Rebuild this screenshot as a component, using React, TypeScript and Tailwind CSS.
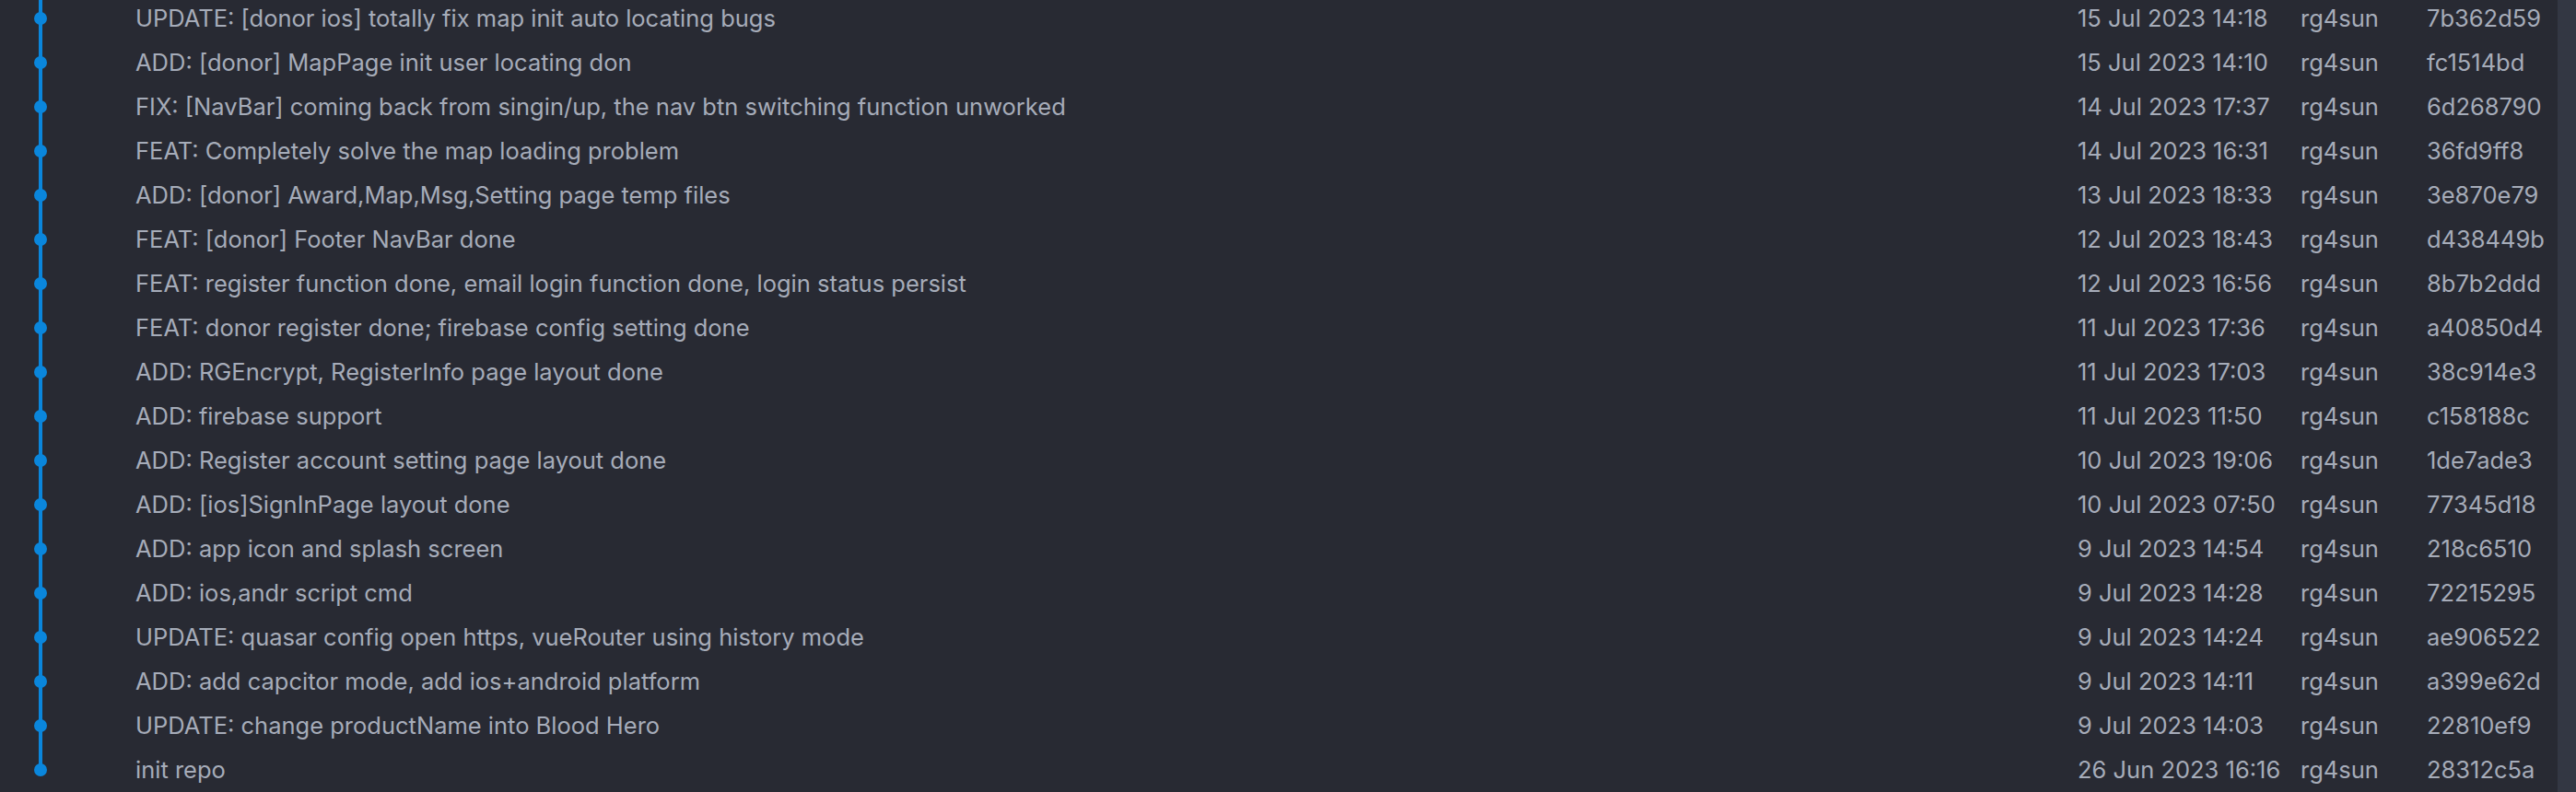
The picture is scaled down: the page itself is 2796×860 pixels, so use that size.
import * as React from "react"

const commits = [
  { msg: "UPDATE: [donor ios] totally fix map init auto locating bugs", date: "15 Jul 2023 14:18", hash: "7b362d59" },
  { msg: "ADD: [donor] MapPage init user locating don", date: "15 Jul 2023 14:10", hash: "fc1514bd" },
  { msg: "FIX: [NavBar] coming back from singin/up, the nav btn switching function unworked", date: "14 Jul 2023 17:37", hash: "6d268790" },
  { msg: "FEAT: Completely solve the map loading problem", date: "14 Jul 2023 16:31", hash: "36fd9ff8" },
  { msg: "ADD: [donor] Award,Map,Msg,Setting page temp files", date: "13 Jul 2023 18:33", hash: "3e870e79" },
  { msg: "FEAT: [donor] Footer NavBar done", date: "12 Jul 2023 18:43", hash: "d438449b" },
  { msg: "FEAT: register function done, email login function done, login status persist", date: "12 Jul 2023 16:56", hash: "8b7b2ddd" },
  { msg: "FEAT: donor register done; firebase config setting done", date: "11 Jul 2023 17:36", hash: "a40850d4" },
  { msg: "ADD: RGEncrypt, RegisterInfo page layout done", date: "11 Jul 2023 17:03", hash: "38c914e3" },
  { msg: "ADD: firebase support", date: "11 Jul 2023 11:50", hash: "c158188c" },
  { msg: "ADD: Register account setting page layout done", date: "10 Jul 2023 19:06", hash: "1de7ade3" },
  { msg: "ADD: [ios]SignInPage layout done", date: "10 Jul 2023 07:50", hash: "77345d18" },
  { msg: "ADD: app icon and splash screen", date: "9 Jul 2023 14:54", hash: "218c6510" },
  { msg: "ADD: ios,andr script cmd", date: "9 Jul 2023 14:28", hash: "72215295" },
  { msg: "UPDATE: quasar config open https, vueRouter using history mode", date: "9 Jul 2023 14:24", hash: "ae906522" },
  { msg: "ADD: add capcitor mode, add ios+android platform", date: "9 Jul 2023 14:11", hash: "a399e62d" },
  { msg: "UPDATE: change productName into Blood Hero", date: "9 Jul 2023 14:03", hash: "22810ef9" },
  { msg: "init repo", date: "26 Jun 2023 16:16", hash: "28312c5a" },
]

function Graph({ last }: { last: boolean }) {
  return (
    <div className="relative h-full w-[147px] shrink-0">
      <div className={last ? "absolute left-[42px] top-0 h-1/2 w-[4px] bg-[#0a86dc]" : "absolute left-[42px] top-0 h-full w-[4px] bg-[#0a86dc]"} />
      <div className="absolute left-[37px] top-[17px] h-[14px] w-[14px] rounded-full bg-[#0a86dc]" />
    </div>
  )
}

export default function App() {
  return (
    <div className="flex h-[860px] w-full overflow-hidden bg-[#282a33] font-['Inter',sans-serif] text-[25.5px] text-[#a6acb9]">
      <div className="-mt-[4px] flex flex-1 flex-col">
        {commits.map((c, i) => (
          <div key={c.hash} className="flex h-[48px] items-center">
            <Graph last={i === commits.length - 1} />
            <div className="flex-1 truncate">{c.msg}</div>
            <div className="w-[242px] shrink-0">{c.date}</div>
            <div className="w-[137px] shrink-0">rg4sun</div>
            <div className="w-[142px] shrink-0">{c.hash}</div>
          </div>
        ))}
      </div>
      <div className="h-full w-[20px] shrink-0 bg-[#333743]" />
    </div>
  )
}
